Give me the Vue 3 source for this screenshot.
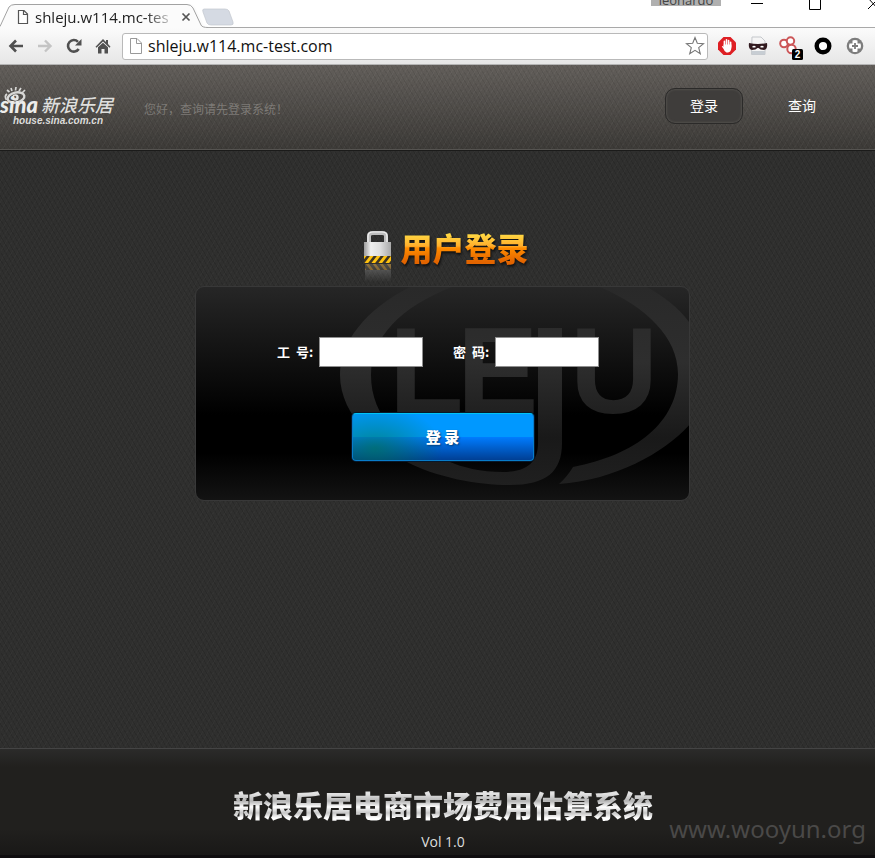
<script setup>
import { ref } from 'vue'

const address = ref('shleju.w114.mc-test.com')
const staffId = ref('')
const password = ref('')
const navItems = [
  { label: '登录', active: true },
  { label: '查询', active: false },
]
</script>

<template>
  <div class="page">
    <div class="tabstrip">
      <div class="tab">
        <svg class="tab-shape" viewBox="0 0 208 28" preserveAspectRatio="none" aria-hidden="true">
          <path d="M0 26 L10 6 Q12 4 15 4 H189 Q193 4 195 7 L204 25 Q205 27 208 27.500 V28 H0Z" fill="#fbfbfb" />
          <path d="M0 26.500 L9 7 Q11 4.500 15 4.500 H187 Q191 4.500 193 8 L201 25 Q202 27.500 208 27.500" fill="none" stroke="#a2a2a2" />
        </svg>
        <svg class="doc" width="12" height="16" viewBox="0 0 12 16" aria-hidden="true">
          <path d="M1.500 1.500H7L10.500 5V14.500H1.500ZM6.500 1.500V5.500H10.500" fill="#fff" stroke="#555" stroke-width="1.200" />
        </svg>
        <span class="tab-title">shleju.w114.mc-tes</span>
        <button class="plain tab-close" aria-label="Close tab">
          <svg width="10" height="10" viewBox="0 0 10 10"><path d="M1.500 1.500L8.500 8.500M8.500 1.500L1.500 8.500" stroke="#555" stroke-width="1.700" /></svg>
        </button>
      </div>
      <button class="plain new-tab" aria-label="New tab">
        <svg width="34" height="18" viewBox="0 0 34 18"><path d="M3 1H24Q27 1 28 3L32 14Q33 17 30 17H10Q7 17 6 15L2 4Q1 1 3 1Z" fill="#d5dae3" stroke="#c3c7ce" stroke-width=".7" /></svg>
      </button>
      <div class="window-tools">
        <button class="profile">leonardo</button>
        <svg width="124" height="12" viewBox="0 0 124 12" aria-hidden="true">
          <path d="M0 3.500H12M58.500 -2V9.500H69.500V-2M117 9L127 -1M117 -2L127 9" fill="none" stroke="#000" />
        </svg>
      </div>
    </div>

    <div class="toolbar">
      <button class="plain" aria-label="Back">
        <svg width="16" height="14" viewBox="0 0 16 14"><path d="M15 7H3M8 1.500L2.500 7L8 12.500" fill="none" stroke="#505050" stroke-width="2.600" /></svg>
      </button>
      <button class="plain" aria-label="Forward">
        <svg width="16" height="14" viewBox="0 0 16 14"><path d="M1 7H13M8 1.500L13.500 7L8 12.500" fill="none" stroke="#c4c4c4" stroke-width="2.400" /></svg>
      </button>
      <button class="plain" aria-label="Reload">
        <svg width="16" height="16" viewBox="0 0 16 16"><path d="M12.700 11A5.800 5.800 0 1 1 12 3.800" fill="none" stroke="#505050" stroke-width="2.600" /><path d="M15.500 1V7.500H9Z" fill="#505050" /></svg>
      </button>
      <button class="plain" aria-label="Home">
        <svg width="16" height="16" viewBox="0 0 16 16"><path d="M8 1L11 4V2H13V6L15.500 8.700L14.500 9.700L8 3.500L1.500 9.700L.5 8.700Z" fill="#505050" /><path d="M3 9.200L8 4.700L13 9.200V15.500H9.500V11H6.500V15.500H3Z" fill="#505050" /></svg>
      </button>
      <div class="omnibox">
        <svg width="14" height="16" viewBox="0 0 14 16" aria-hidden="true">
          <path d="M1.500 .5H8L12.500 5V15.500H1.500ZM7.500 .5V5.500H12.500" fill="#fff" stroke="#999" />
        </svg>
        <input v-model="address" type="text" aria-label="Address" spellcheck="false" />
        <button class="plain star" aria-label="Bookmark">
          <svg width="20" height="20" viewBox="0 0 20 20"><path d="M10 1.500L12.300 7.300L18.500 7.700L13.700 11.600L15.300 17.800L10 14.400L4.700 17.800L6.300 11.600L1.500 7.700L7.700 7.300Z" fill="#fff" stroke="#777" stroke-width="1.100" /></svg>
        </button>
      </div>
      <div class="extensions">
        <svg width="20" height="20" viewBox="0 0 20 20" aria-hidden="true">
          <path d="M6.500 1H13.500L19 6.500V13.500L13.500 19H6.500L1 13.500V6.500Z" fill="#de1f24" />
          <path d="M7.400 11V5.400M9.500 10V3.800M11.600 10V4.500M13.600 11V6.300" stroke="#fff" stroke-width="1.600" stroke-linecap="round" />
          <path d="M6.600 8.500H14.400V12Q14 16 11 16.500H9.500Q7.500 16 6.600 13L4.800 10.500Q5.300 9.500 6.600 11Z" fill="#fff" />
        </svg>
        <svg width="20" height="20" viewBox="0 0 20 20" aria-hidden="true">
          <path d="M4 1H13L17 5V18.500H3.500Z" fill="#f5f5f5" stroke="#c5c8cc" /><path d="M4 15H17V18.500H4Z" fill="#c7cdd3" />
          <path d="M1 7Q10 9 19 7Q20 13 16 14Q12 14 10.500 12H9.500Q8 14 4 14Q0 13 1 7Z" fill="#321b20" />
          <path d="M4 11Q6 8.500 8 11Q6 12 4 11ZM12 11Q14 8.500 16 11Q14 12 12 11Z" fill="#fff" />
        </svg>
        <svg class="linked" width="24" height="28" viewBox="0 -2 24 28" aria-hidden="true">
          <g fill="#fff" stroke="#cc5658" stroke-width="2"><circle cx="5" cy="9.500" r="3.800" /><circle cx="11.500" cy="7" r="3.700" /><circle cx="12.500" cy="15" r="4.200" /></g>
          <rect x="13" y="15" width="11" height="11" rx="1.500" fill="#000" />
          <text x="18.500" y="24" class="badge-text">2</text>
        </svg>
        <svg width="18" height="18" viewBox="0 0 18 18" aria-hidden="true"><circle cx="9" cy="9" r="6.300" fill="#fff" stroke="#000" stroke-width="4.400" /></svg>
        <svg class="last-ext" width="18" height="18" viewBox="0 0 18 18" aria-hidden="true">
          <circle cx="9" cy="9" r="8.300" fill="#7d7d7d" />
          <path d="M6.500 3.500Q9 2.500 11.500 3.500V6.500H14.500Q15.500 9 14.500 11.500H11.500V14.500Q9 15.500 6.500 14.500V11.500H3.500Q2.500 9 3.500 6.500H6.500Z" fill="#fff" />
          <path d="M9 6V12M6 9H12" stroke="#7d7d7d" stroke-width="1.800" />
        </svg>
      </div>
    </div>

    <header class="site-header">
      <a href="#" class="logo" aria-label="新浪乐居">
        <svg width="118" height="42" viewBox="0 0 118 42">
          <g fill="none" stroke="#d8d8d6">
            <ellipse cx="16" cy="11.500" rx="8.500" ry="5" stroke-width="2.400" transform="rotate(-12 16 11.500)" />
            <path d="M7 8Q4 10 6.500 14M9.500 6L7 4M12 5L11 2M15.500 4.500L16 1M19 5L21 2M22 7L25 4" stroke-width="1.700" />
          </g>
          <circle cx="15.500" cy="11.500" r="3.200" fill="#e8e8e6" /><circle cx="15" cy="11" r="1.300" fill="#63605c" />
          <text x="0" y="27" class="logo-sina">sina</text>
          <text x="41" y="26" class="logo-name">新浪乐居</text>
          <text x="13" y="38" class="logo-site">house.sina.com.cn</text>
        </svg>
      </a>
      <p class="hint">您好，查询请先登录系统！</p>
      <nav class="nav">
        <a v-for="item in navItems" :key="item.label" href="#" :class="{ active: item.active }">{{ item.label }}</a>
      </nav>
    </header>

    <main class="content">
      <h1 class="heading">
        <svg width="30" height="54" viewBox="0 0 30 54" aria-hidden="true">
          <defs>
            <linearGradient id="steel"><stop offset="0" stop-color="#9b9b9b" /><stop offset=".25" stop-color="#efefef" /><stop offset=".6" stop-color="#dedede" /><stop offset="1" stop-color="#a9a9a9" /></linearGradient>
            <linearGradient id="mirror" x2="0" y2="1"><stop offset="0" stop-color="#b8b8b8" stop-opacity=".4" /><stop offset="1" stop-color="#aaa" stop-opacity="0" /></linearGradient>
            <clipPath id="band"><rect x="1" y="27" width="27" height="7" /></clipPath>
            <clipPath id="band-mirror"><rect x="2" y="35" width="26" height="6" /></clipPath>
          </defs>
          <path d="M6 14V7Q6 4 10 4H19Q23 4 23 7V14" fill="none" stroke="#bdbdbd" stroke-width="4" />
          <path d="M5 14V7Q5 3 10 3H19Q24 3 24 7V14" fill="none" stroke="#f4f4f4" stroke-width="1.200" />
          <rect x="1" y="13" width="27" height="21" fill="url(#steel)" />
          <g clip-path="url(#band)"><rect x="1" y="27" width="27" height="7" fill="#ffc20e" /><path d="M-1 35L6 26M6 35L13 26M13 35L20 26M20 35L27 26M27 35L34 26" stroke="#3c3426" stroke-width="2.600" /></g>
          <rect x="2" y="35" width="26" height="18" fill="url(#mirror)" />
          <g clip-path="url(#band-mirror)" opacity=".35"><rect x="2" y="35" width="26" height="6" fill="#d98b00" /><path d="M0 34L7 43M7 34L14 43M14 34L21 43M21 34L28 43" stroke="#221d14" stroke-width="3" /></g>
        </svg>
        <span>用户登录</span>
      </h1>

      <form class="panel" @submit.prevent>
        <svg class="mark" width="495" height="215" viewBox="0 0 495 215" aria-hidden="true">
          <defs>
            <linearGradient id="mark-fill" gradientUnits="userSpaceOnUse" x1="0" y1="0" x2="0" y2="215">
              <stop offset="0" stop-color="#292929" /><stop offset=".35" stop-color="#2e2e2e" /><stop offset=".7" stop-color="#191919" /><stop offset="1" stop-color="#222" />
            </linearGradient>
          </defs>
          <g fill="url(#mark-fill)">
            <path d="M214 0C170 22 144 55 144 88C144 130 185 163 211 175C240 190 280 198 314 198C350 198 366 185 366 156V41H342V156C342 176 330 185 307 185C285 185 265 180 254 175C205 160 175 130 175 88C175 50 205 20 256 0Z" />
            <path d="M404 0C450 20 482 50 482 87C482 135 440 168 377 180Q371 190 363 197C420 193 470 165 495 136V38C485 22 468 10 451 0Z" />
            <text x="193" y="126" class="mark-text">L</text>
            <text x="261" y="126" class="mark-text">E</text>
            <text x="374" y="126" class="mark-text">U</text>
          </g>
        </svg>
        <div class="fields">
          <label for="staff">工&nbsp; 号:</label>
          <input id="staff" v-model="staffId" type="text" />
          <label for="pass">密&nbsp; 码:</label>
          <input id="pass" v-model="password" type="password" />
        </div>
        <button class="submit" type="submit">登 录</button>
      </form>
    </main>

    <footer class="site-footer">
      <h2>新浪乐居电商市场费用估算系统</h2>
      <p>Vol 1.0</p>
      <span class="watermark">www.wooyun.org</span>
    </footer>
  </div>
</template>

<style>
body {
  margin: 0;
  background: #2d2d2c;
}
</style>

<style scoped>
* {
  box-sizing: border-box;
}
.page {
  display: flex;
  flex-direction: column;
  min-height: 100vh;
  overflow: hidden;
  font-family: "Open Sans", "Noto Sans CJK SC", sans-serif;
}
svg {
  display: block;
  flex: none;
}
.plain {
  display: block;
  padding: 0;
  border: 0;
  background: none;
}
.tabstrip {
  display: flex;
  height: 28px;
  background: linear-gradient(#fff 27px, #a9a9a9 27px);
}
.tab {
  position: relative;
  display: flex;
  align-items: center;
  width: 201px;
  padding: 5px 10px 0 17px;
  gap: 6px;
}
.tab > * {
  position: relative;
}
.tab .tab-shape {
  position: absolute;
  left: 0;
  top: 0;
  width: 208px;
  height: 28px;
}
.tab-title {
  width: 140px;
  overflow: hidden;
  white-space: nowrap;
  font-size: 15px;
  line-height: 20px;
  color: #222;
  -webkit-mask-image: linear-gradient(90deg, #000 110px, transparent 142px);
  mask-image: linear-gradient(90deg, #000 110px, transparent 142px);
}
.new-tab {
  padding-top: 8px;
  height: 26px;
}
.window-tools {
  display: flex;
  align-items: flex-start;
  gap: 30px;
  margin-left: auto;
}
.profile {
  display: flex;
  align-items: flex-end;
  justify-content: center;
  width: 70px;
  height: 6px;
  padding: 0;
  border: 0;
  overflow: hidden;
  background: #b0b0b0;
  color: #444;
  font: 13px/12px "Open Sans", sans-serif;
}
.toolbar {
  display: flex;
  align-items: center;
  height: 37px;
  padding: 0 11px 0 8px;
  gap: 13px;
  background: linear-gradient(#fbfbfb, #e6e6e6);
  border-bottom: 1px solid #b4b4b4;
}
.omnibox {
  display: flex;
  align-items: center;
  flex: 1;
  height: 27px;
  margin-left: -2px;
  padding: 0 2px 0 6px;
  gap: 5px;
  background: #fff;
  border: 1px solid #b9b9b9;
  border-radius: 3px;
}
.omnibox input {
  flex: 1;
  min-width: 0;
  padding: 0;
  border: 0;
  outline: 0;
  background: none;
  color: #111;
  font: 16px/22px "Open Sans", sans-serif;
}
.extensions {
  display: flex;
  align-items: center;
  gap: 11px;
  margin-left: -4px;
}
.last-ext {
  margin-left: 3px;
}
.badge-text {
  fill: #fff;
  font: bold 10px "Liberation Sans", sans-serif;
  text-anchor: middle;
}
.site-header {
  display: flex;
  align-items: center;
  height: 85px;
  padding-right: 34px;
  background:
    repeating-linear-gradient(60deg, rgba(0, 0, 0, .07) 0 1px, transparent 1px 4px),
    repeating-linear-gradient(-60deg, rgba(255, 255, 255, .03) 0 1px, transparent 1px 5px),
    linear-gradient(#625e5a, #3c3a37);
  border-bottom: 1px solid #555350;
  z-index: 1;
  box-shadow: 0 1px 0 #1b1b1a;
}
.logo-sina {
  fill: #ededeb;
  font: italic 900 22px "Lato", sans-serif;
}
.logo-name {
  fill: #dfdfdd;
  font: italic 500 18px "Noto Sans CJK SC", sans-serif;
}
.logo-site {
  fill: #dcdcda;
  font: italic bold 10px "Liberation Sans", sans-serif;
}
.hint {
  margin: 6px 0 0 26px;
  font-size: 12px;
  line-height: 18px;
  color: #7d7a76;
}
.nav {
  display: flex;
  gap: 20px;
  margin: 0 0 2px auto;
}
.nav a {
  width: 78px;
  padding: 7px 0;
  border: 1px solid transparent;
  border-radius: 10px;
  color: #fff;
  font-size: 14px;
  line-height: 20px;
  text-align: center;
  text-decoration: none;
}
.nav a.active {
  background: #3f3d3b;
  border-color: #2b2a29;
  box-shadow: inset 0 0 2px 1px #504e4b;
}
.content {
  display: flex;
  flex-direction: column;
  align-items: center;
  flex: 1;
  padding: 79px 0 79px 10px;
  background:
    repeating-linear-gradient(60deg, rgba(0, 0, 0, .1) 0 1px, transparent 1px 4px),
    repeating-linear-gradient(-60deg, rgba(255, 255, 255, .02) 0 1px, transparent 1px 5px),
    #2f2f2e;
}
.heading {
  display: flex;
  align-items: flex-start;
  gap: 7px;
  margin: 0 0 3px 7px;
  font: 900 32px/36px "Noto Sans CJK SC", sans-serif;
}
.heading span {
  background: linear-gradient(#ffdd45 4px, #ffae2c 17px, #ff8c00 19px, #e26400 33px);
  background-clip: text;
  -webkit-background-clip: text;
  color: transparent;
  filter: drop-shadow(1px 2px 1px #111);
}
.panel {
  position: relative;
  width: 495px;
  max-width: 100%;
  padding: 50px 0 39px;
  overflow: hidden;
  border: 1px solid #383838;
  border-radius: 9px;
  background: linear-gradient(#262626, #000 60%, #000 78%, #131313);
}
.mark {
  position: absolute;
  top: 0;
  left: 0;
}
.mark-text {
  font: bold 122px "Liberation Sans", sans-serif;
}
.fields {
  position: relative;
  display: flex;
  align-items: center;
  padding-left: 81px;
}
.fields label {
  width: 42px;
  color: #fff;
  font: bold 13px/20px "Noto Sans CJK SC", sans-serif;
  white-space: nowrap;
}
.fields input {
  width: 104px;
  height: 30px;
  margin-right: 30px;
  padding: 0 6px;
  border: 1px solid #8f8f8f;
  background: #fff;
  font-size: 14px;
}
.submit {
  position: relative;
  display: block;
  width: 182px;
  height: 48px;
  margin: 46px auto 0;
  padding: 0;
  border: 1px solid #087cc9;
  border-top-color: #00c4f5;
  border-radius: 4px;
  background:
    radial-gradient(ellipse 68px 42px at 22px 34px, rgba(0, 120, 70, .6), transparent),
    linear-gradient(#0098ff 49%, #007cff 50%, #003f94);
  box-shadow: 0 0 0 1px #06182c;
  color: #fff;
  font: 900 15px/20px "Noto Sans CJK SC", sans-serif;
  text-shadow: 1px 1px 2px #003d75;
}
.site-footer {
  position: relative;
  height: 110px;
  padding: 37px 0 0 11px;
  border-top: 1px solid #444;
  border-bottom: 3px solid #0f0d0f;
  background: linear-gradient(#2b2b2a, #21201e 18px, #21201e 80px, #191817);
  text-align: center;
}
.site-footer h2 {
  width: fit-content;
  margin: 0 auto;
  background: linear-gradient(#e2e2e2 8px, #b4b4b4 15px, #fff 21px, #c6c6c6 27px, #fff 32px);
  background-clip: text;
  -webkit-background-clip: text;
  color: transparent;
  font: 900 30px/36px "Noto Sans CJK SC", sans-serif;
  white-space: nowrap;
}
.site-footer p {
  margin: 10px 0 0;
  color: #ddd;
  font-size: 14px;
  line-height: 20px;
}
.watermark {
  position: absolute;
  right: 9px;
  bottom: 9px;
  color: #4a4948;
  font: 24px/34px "Noto Sans", sans-serif;
}
</style>
